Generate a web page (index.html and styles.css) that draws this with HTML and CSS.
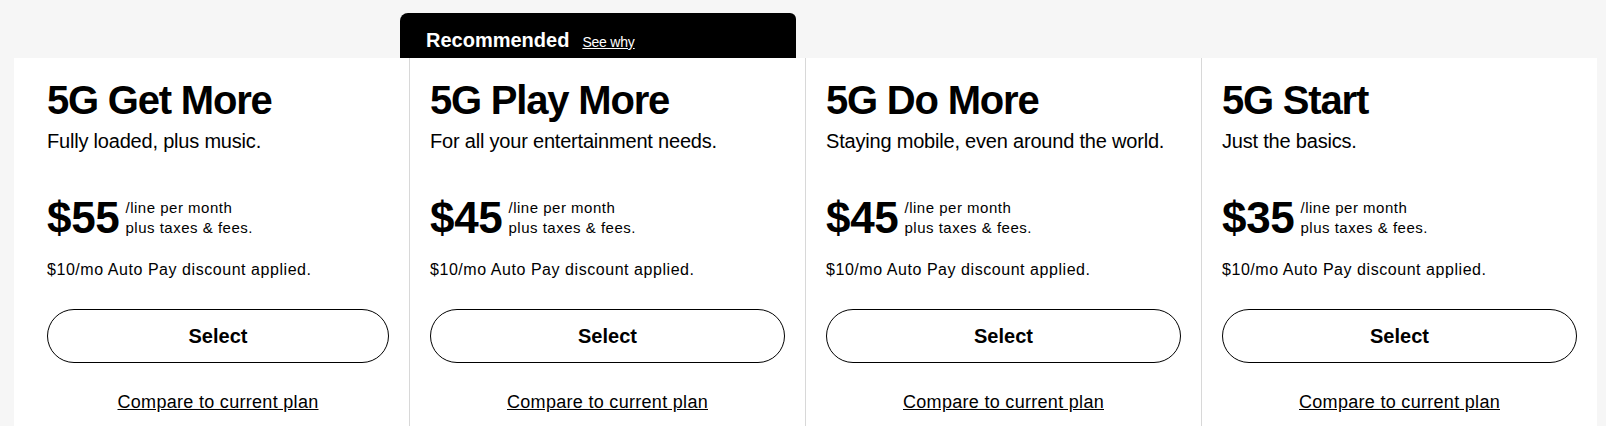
FILE: index.html
```html
<!DOCTYPE html>
<html lang="en">
<head>
<meta charset="utf-8">
<title>Plans</title>
<link rel="stylesheet" href="styles.css">
</head>
<body>
<main class="plans">
  <section class="plan plan-first">
    <h2 class="plan-name">5G Get More</h2>
    <p class="plan-tagline">Fully loaded, plus music.</p>
    <div class="price-row">
      <span class="price">$55</span>
      <span class="price-note">/line per month<br>plus taxes &amp; fees.</span>
    </div>
    <p class="discount">$10/mo Auto Pay discount applied.</p>
    <button class="select-btn" type="button">Select</button>
    <a class="compare" href="#">Compare to current plan</a>
  </section>
  <section class="plan plan-recommended">
    <div class="rec-tab">
      <span class="rec-label">Recommended</span>
      <a class="rec-link" href="#">See why</a>
    </div>
    <h2 class="plan-name">5G Play More</h2>
    <p class="plan-tagline">For all your entertainment needs.</p>
    <div class="price-row">
      <span class="price">$45</span>
      <span class="price-note">/line per month<br>plus taxes &amp; fees.</span>
    </div>
    <p class="discount">$10/mo Auto Pay discount applied.</p>
    <button class="select-btn" type="button">Select</button>
    <a class="compare" href="#">Compare to current plan</a>
  </section>
  <section class="plan">
    <h2 class="plan-name">5G Do More</h2>
    <p class="plan-tagline">Staying mobile, even around the world.</p>
    <div class="price-row">
      <span class="price">$45</span>
      <span class="price-note">/line per month<br>plus taxes &amp; fees.</span>
    </div>
    <p class="discount">$10/mo Auto Pay discount applied.</p>
    <button class="select-btn" type="button">Select</button>
    <a class="compare" href="#">Compare to current plan</a>
  </section>
  <section class="plan">
    <h2 class="plan-name">5G Start</h2>
    <p class="plan-tagline">Just the basics.</p>
    <div class="price-row">
      <span class="price">$35</span>
      <span class="price-note">/line per month<br>plus taxes &amp; fees.</span>
    </div>
    <p class="discount">$10/mo Auto Pay discount applied.</p>
    <button class="select-btn" type="button">Select</button>
    <a class="compare" href="#">Compare to current plan</a>
  </section>
</main>
</body>
</html>
```

FILE: styles.css
```css
* { box-sizing: border-box; }

html, body {
  margin: 0;
  padding: 0;
  background: #f6f6f6;
  overflow: hidden;
  font-family: "Liberation Sans", Arial, sans-serif;
  color: #000;
}

.plans {
  display: grid;
  grid-template-columns: 395px 396px 396px 396px;
  width: 1583px;
  margin: 58px 0 0 14px;
  min-height: 368px;
  background: #fff;
}

.plan {
  position: relative;
  display: flex;
  flex-direction: column;
  align-items: stretch;
  padding: 18px 20px 0 20px;
  border-left: 1px solid #d8d8d8;
}

.plan-first {
  border-left: none;
  padding-left: 33px;
}

.rec-tab {
  position: absolute;
  left: -10px;
  top: -45px;
  width: 396px;
  height: 45px;
  background: #000;
  border-radius: 8px 6px 0 0;
  display: flex;
  align-items: baseline;
  gap: 13px;
  padding: 15px 0 0 26px;
}

.rec-label {
  color: #fff;
  font-weight: 700;
  font-size: 20px;
  line-height: 24px;
  letter-spacing: 0;
}

.rec-link {
  color: #fff;
  font-size: 14px;
  line-height: 18px;
  letter-spacing: -0.2px;
  text-decoration: underline;
}

.plan-name {
  margin: 0;
  font-size: 40px;
  line-height: 48px;
  font-weight: 700;
  letter-spacing: -1.2px;
}

.plan-tagline {
  margin: 3px 0 0;
  font-size: 20px;
  line-height: 28px;
  letter-spacing: -0.2px;
}

.price-row {
  display: flex;
  align-items: flex-end;
  gap: 6px;
  margin-top: 43px;
}

.price {
  font-size: 44px;
  line-height: 40px;
  font-weight: 700;
  letter-spacing: -0.3px;
}

.price-note {
  font-size: 15px;
  line-height: 20px;
  letter-spacing: 0.5px;
}

.discount {
  margin: 20px 0 0;
  font-size: 16px;
  line-height: 24px;
  letter-spacing: 0.55px;
}

.select-btn {
  margin-top: 27px;
  height: 54px;
  width: 100%;
  border: 1px solid #000;
  border-radius: 27px;
  background: #fff;
  color: #000;
  font-family: "Liberation Sans", Arial, sans-serif;
  font-size: 20px;
  font-weight: 700;
  padding: 0;
}

.compare {
  align-self: center;
  margin-top: 27px;
  font-size: 18px;
  line-height: 24px;
  letter-spacing: 0.3px;
  color: #000;
  text-decoration: underline;
}
```
